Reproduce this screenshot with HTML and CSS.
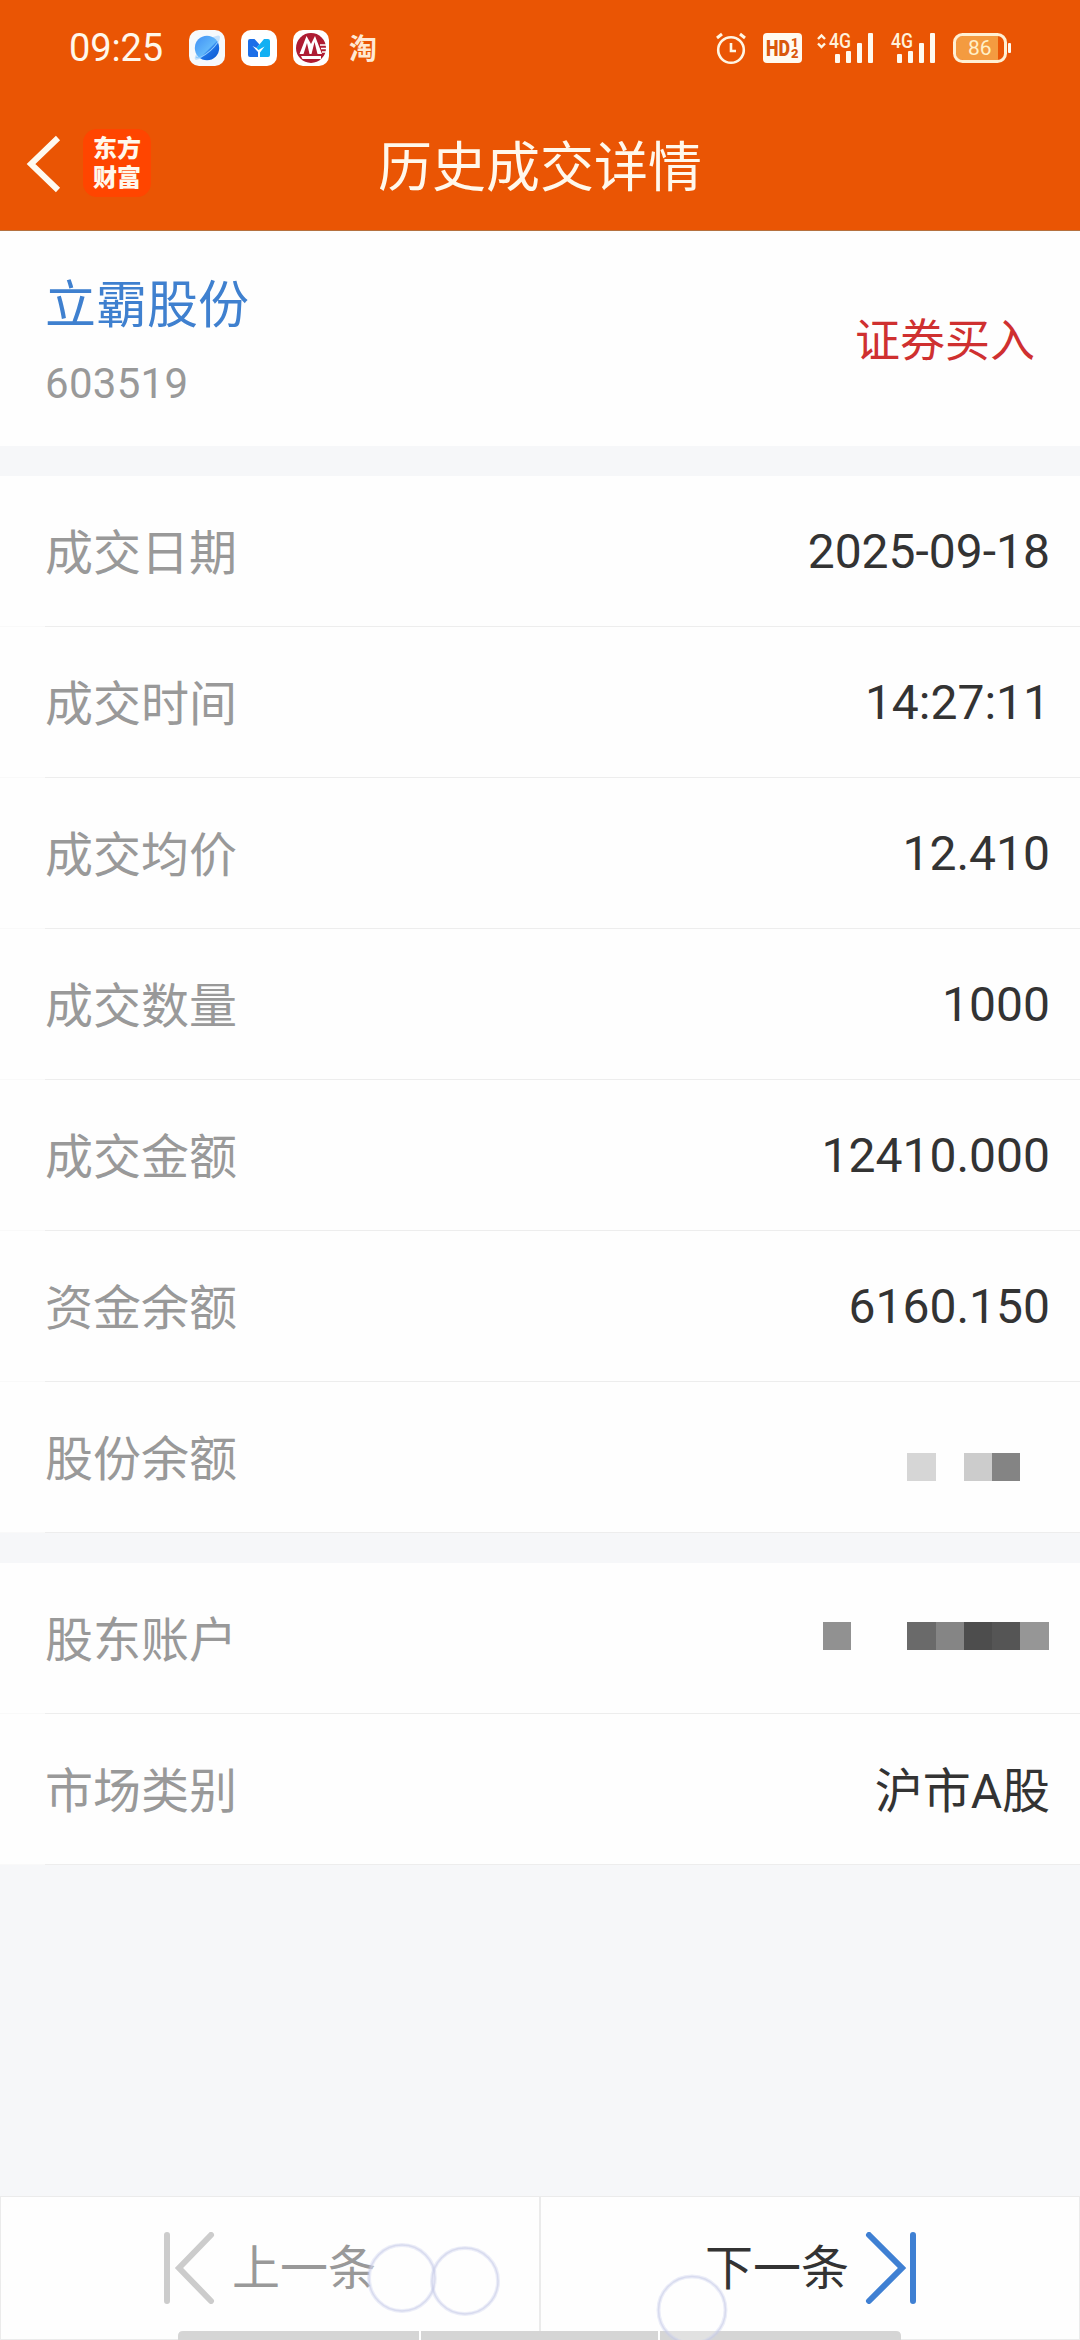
FILE: index.html
```html
<!DOCTYPE html>
<html lang="zh-CN">
<head>
<meta charset="utf-8">
<title>历史成交详情</title>
<link rel="stylesheet" href="styles.css">
</head>
<body>
<div class="screen">
  <header class="header">
    <div class="status">
      <span class="clock">09:25</span>
      <div class="apps">
        <svg width="36" height="36" viewBox="0 0 36 36">
          <defs>
            <linearGradient id="sphere" x1="0" y1="0" x2="1" y2="1"><stop offset="0" stop-color="#3f8ff5"/><stop offset=".55" stop-color="#62b8fb"/><stop offset=".6" stop-color="#1d72e6"/><stop offset="1" stop-color="#0c58cf"/></linearGradient>
          </defs>
          <rect width="36" height="36" rx="10" fill="#f6f9fc"/>
          <path d="M24 7 Q31 4 31 7 Q31 12 24 20 Q14 29 7 30 Q4 29 8 23Z" fill="#c4e1fb"/>
          <circle cx="18" cy="18" r="12.2" fill="url(#sphere)"/>
          <path d="M7 27 Q9 28.500 12 27 Q22 22 29 12" fill="none" stroke="#8ccaff" stroke-width="1.2"/>
        </svg>
        <svg width="36" height="36" viewBox="0 0 36 36">
          <rect width="36" height="36" rx="10" fill="#fff"/>
          <path d="M7 11 Q7 9 9 9 H13.500 L18.500 14.500 L15.500 18 L11.500 16 L17 22 V27 H9 Q7 27 7 25Z" fill="#1c6fe8"/>
          <path d="M29 11 Q29 9 27 9 H23 L15.500 18 L17.500 20 L23.500 16.500 L19 22.500 V27 H27 Q29 27 29 25Z" fill="#12b0f3"/>
        </svg>
        <svg width="36" height="36" viewBox="0 0 36 36">
          <rect width="36" height="36" rx="10" fill="#fff"/>
          <circle cx="18" cy="18" r="15" fill="#ae1c33"/>
          <path d="M6.500 24 L13.500 6 L18 14 L22 6 L29 24 H24.500 L21.500 12 L18.500 24 H16.500 L14 13 L10.500 24Z" fill="#fff"/>
          <path d="M8 26 H28 V29 H9.500Z" fill="#fff"/>
          <path d="M27 15 H34 M28 18.500 H34 M29 22 H34" stroke="#fff" stroke-width="1.700"/>
        </svg>
        <span class="tao">淘</span>
      </div>
      <svg class="signals" width="300" height="36" viewBox="712 30 300 36">
        <g fill="none" stroke="#fff6e4" stroke-width="2.6">
          <circle cx="731" cy="50" r="12.8"/>
          <path d="M731 43 V51 H736"/>
          <path d="M717 38 L722 34 M745 38 L740 34" stroke-width="3"/>
        </g>
        <rect x="763" y="33" width="39" height="30" rx="4" fill="#fffaf0"/>
        <g fill="#d9570c" font-family="Roboto" font-weight="900">
          <text x="766" y="56" font-size="22" textLength="24" lengthAdjust="spacingAndGlyphs">HD</text>
          <text x="791" y="47" font-size="13">1</text>
          <text x="791" y="58" font-size="13">2</text>
        </g>
        <path d="M818 39 L821.500 35.500 L825 39 M818 43.500 L821.500 47 L825 43.500" fill="none" stroke="#fff6e4" stroke-width="2.4"/>
        <g fill="#fff2dc" font-family="Roboto" font-weight="500" font-size="20">
          <text x="829" y="48" textLength="22" lengthAdjust="spacingAndGlyphs">4G</text>
          <text x="891" y="48" textLength="22" lengthAdjust="spacingAndGlyphs">4G</text>
        </g>
        <g fill="#fffaf0">
          <rect x="835" y="54" width="5" height="9" rx="1"/><rect x="846" y="51" width="5" height="12" rx="1"/><rect x="857" y="43" width="5" height="20" rx="1"/><rect x="868" y="33" width="5" height="30" rx="1"/>
          <rect x="897" y="54" width="5" height="9" rx="1"/><rect x="908" y="51" width="5" height="12" rx="1"/><rect x="919" y="43" width="5" height="20" rx="1"/><rect x="930" y="33" width="5" height="30" rx="1"/>
          <rect x="1008" y="43" width="3" height="10" rx="1"/>
        </g>
        <path d="M963 36 H998 V60 H963 Q956 60 956 53 V43 Q956 36 963 36Z" fill="#f49b40"/>
        <rect x="954.500" y="34.500" width="51" height="27" rx="8" fill="none" stroke="#fff0d4" stroke-width="3"/>
        <text x="968" y="55" font-family="Roboto" font-size="21" fill="#fff0c8">86</text>
      </svg>
    </div>
    <div class="nav">
      <div class="nav-left">
        <svg width="36" height="60" viewBox="0 0 36 60"><path d="M32 5 L5 31 L32 57" fill="none" stroke="#fffaf0" stroke-width="6"/></svg>
        <div class="brand">东方<br>财富</div>
      </div>
      <h1 class="title">历史成交详情</h1>
    </div>
  </header>

  <section class="summary">
    <div>
      <div class="stock">立霸股份</div>
      <div class="code">603519</div>
    </div>
    <div class="side">证券买入</div>
  </section>

  <section class="list">
    <div class="row"><span class="label">成交日期</span><span class="value">2025-09-18</span></div>
    <div class="row"><span class="label">成交时间</span><span class="value">14:27:11</span></div>
    <div class="row"><span class="label">成交均价</span><span class="value">12.410</span></div>
    <div class="row"><span class="label">成交数量</span><span class="value">1000</span></div>
    <div class="row"><span class="label">成交金额</span><span class="value">12410.000</span></div>
    <div class="row"><span class="label">资金余额</span><span class="value">6160.150</span></div>
    <div class="row"><span class="label">股份余额</span>
      <svg class="mask mask-balance" width="227" height="28" viewBox="0 0 227 28"><rect x="84" width="29" height="28" fill="#d6d6d6"/><rect x="141" width="28" height="28" fill="#ccc"/><rect x="169" width="28" height="28" fill="#848484"/></svg>
    </div>
  </section>

  <section class="list">
    <div class="row"><span class="label">股东账户</span>
      <svg class="mask mask-account" width="227" height="28" viewBox="0 0 227 28"><rect width="28" height="28" fill="#919191"/><rect x="84" width="29" height="28" fill="#6a6a6a"/><rect x="113" width="28" height="28" fill="#858585"/><rect x="141" width="28" height="28" fill="#4d4d4d"/><rect x="169" width="28" height="28" fill="#555"/><rect x="197" width="29" height="28" fill="#969696"/></svg>
    </div>
    <div class="row"><span class="label">市场类别</span><span class="value value-cjk">沪市A股</span></div>
  </section>

  <footer class="pager">
    <div class="page prev">
      <svg width="52" height="72" viewBox="0 0 52 72"><path d="M4 3 V69 M48 3 L16 36 L48 69" fill="none" stroke="#ccc" stroke-width="6" stroke-linecap="round"/></svg>
      <span class="page-text">上一条</span>
    </div>
    <div class="page next">
      <span class="page-text">下一条</span>
      <svg width="52" height="72" viewBox="0 0 52 72"><path d="M48 3 V69 M4 3 L37 36 L4 69" fill="none" stroke="#3f80d3" stroke-width="6" stroke-linecap="round"/></svg>
    </div>
    <svg class="overlay" width="1080" height="144" viewBox="0 2196 1080 144">
      <path d="M178 2340 V2336 Q178 2331 183 2331 H896 Q901 2331 901 2336 V2340Z" fill="#d5d5d5"/>
      <path d="M420 2331 V2340 M659 2331 V2340" stroke="#fff" stroke-width="2"/>
      <g fill="#fff" fill-opacity=".3">
        <g stroke="#c9cfee" stroke-opacity=".35" stroke-width="4"><circle cx="402" cy="2278" r="33"/><circle cx="465" cy="2281" r="33"/><circle cx="692" cy="2310" r="33.500"/></g>
        <g fill="none" stroke="#c5cae6" stroke-opacity=".5" stroke-width="1.500"><circle cx="402" cy="2278" r="33"/><circle cx="465" cy="2281" r="33"/><circle cx="692" cy="2310" r="33.500"/></g>
      </g>
    </svg>
  </footer>
</div>
</body>
</html>
```
FILE: styles.css
```css
* { box-sizing: border-box; }
body {
  margin: 0;
  font-family: Roboto, "Noto Sans CJK SC", sans-serif;
  color: #333;
}
svg { display: block; flex: none; }
.screen {
  width: 1080px;
  height: 2340px;
  display: flex;
  flex-direction: column;
  background: #f6f7f9;
  overflow: hidden;
}
.header {
  height: 231px;
  flex: none;
  background: #ea5504;
  border-bottom: 1px solid #b5713f;
  color: #fff8ec;
}
.status {
  height: 96px;
  padding: 0 68px;
  display: flex;
  align-items: center;
}
.clock {
  width: 121px;
  padding-left: 1px;
  font-size: 38px;
  letter-spacing: -.1px;
  line-height: 46px;
}
.apps { display: flex; align-items: center; gap: 16px; }
.tao {
  margin: -3px 0 0 4px;
  font: 700 28px/36px "Noto Sans CJK SC", sans-serif;
  color: #ffe9d3;
}
.signals { margin-left: auto; }
.nav {
  height: 134px;
  display: grid;
  grid-template-columns: 1fr auto 1fr;
  align-items: center;
}
.nav-left {
  display: flex;
  align-items: center;
  gap: 21px;
  padding-left: 26px;
}
.brand {
  width: 68px;
  height: 68px;
  border-radius: 14px;
  background: #ff4500;
  padding-top: 3px;
  text-align: center;
  font: 900 24px/29px "Noto Sans CJK SC", sans-serif;
}
.title {
  margin: 0;
  padding-top: 12px;
  font-size: 54px;
  font-weight: 400;
  line-height: 80px;
}
.summary {
  height: 215px;
  flex: none;
  background: #fefefe;
  padding: 2px 45px 0;
  display: flex;
  align-items: center;
  justify-content: space-between;
}
.stock {
  padding-top: 1px;
  font-size: 51px;
  line-height: 76px;
  color: #3f80cf;
}
.code {
  margin-top: 12px;
  font-size: 42px;
  letter-spacing: .3px;
  line-height: 56px;
  color: #999;
}
.side {
  padding-top: 4px;
  font-size: 45px;
  line-height: 66px;
  color: #cf3030;
}
.list { flex: none; margin-top: 30px; background: #fefefe; }
.row {
  height: 151px;
  padding: 0 30px 0 45px;
  display: flex;
  align-items: center;
  justify-content: space-between;
  background: linear-gradient(90deg, #f9f9f9 45px, #ededed 45px) bottom / 100% 1px no-repeat;
}
.label { padding-top: 4px; font-size: 48px; line-height: 70px; color: #999; }
.value { padding-top: 1px; font-size: 48px; line-height: 56px; }
.value-cjk { padding-top: 4px; line-height: 70px; }
.mask-balance { margin-top: 19px; }
.mask-account { margin-bottom: 5px; }
.pager {
  position: relative;
  margin-top: auto;
  height: 144px;
  flex: none;
  display: grid;
  grid-template-columns: 1fr 1fr;
}
.page {
  display: flex;
  align-items: center;
  gap: 17px;
  background: #fefefe;
  border: 1px solid #ebebeb;
  padding-bottom: 1px;
  font-size: 48px;
  line-height: 70px;
}
.page-text { padding-top: 2px; }
.prev { padding-left: 162px; color: #999; }
.next { padding-left: 164px; gap: 16px; }
.overlay { position: absolute; left: 0; top: 0; }
```
